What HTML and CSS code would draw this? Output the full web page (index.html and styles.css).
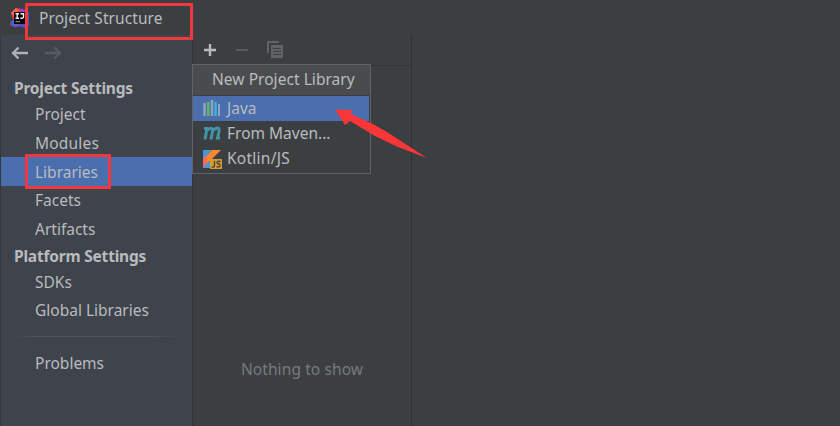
FILE: index.html
```html
<!DOCTYPE html>
<html lang="en">
<head>
<meta charset="utf-8">
<title>Project Structure</title>
<link rel="stylesheet" href="styles.css">
</head>
<body>
<div class="window">
  <header class="titlebar">
    <svg class="logo" width="20" height="20" viewBox="0 0 20 20">
      <path d="M1 5 6 0 13 1 15 17 5 19 0 17 3 12z" fill="#e8384f"/>
      <path d="M1 5 6 0 9 3 4 9z" fill="#ef6a4b"/>
      <path d="M0 14 5 11 8 19 2 18z" fill="#4b5ee8"/>
      <path d="M11 1 16 2 19 5V17L15 20 8 18z" fill="#4d50cf"/>
      <path d="M10 1 14 2 15 5H9z" fill="#b13bc0"/>
      <path d="M4 4H16V16H4z" fill="#08080c"/>
      <path d="M5.5 5.7H9M7.2 5.7V10.3M5.5 10.3H9M10.5 5.7H13.5V9Q13.5 10.3 10.3 10.3" fill="none" stroke="#eee" stroke-width="1.4"/>
      <path d="M5.5 13.7H10" stroke="#a69a8c"/>
    </svg>
    <span class="title">Project Structure</span>
  </header>
  <div class="body">
    <nav class="sidebar">
      <div class="history">
        <svg width="18" height="14" viewBox="0 0 18 14"><path d="M17 7H2M7.5 1.5 2 7l5.5 5.5" fill="none" stroke="#afb1b3" stroke-width="2.300"/></svg>
        <svg width="18" height="14" viewBox="0 0 18 14"><path d="M1 7H16M10.500 1.500 16 7l-5.500 5.500" fill="none" stroke="#565b60" stroke-width="2.300"/></svg>
      </div>
      <div class="group">Project Settings</div>
      <div class="item">Project</div>
      <div class="item modules">Modules</div>
      <div class="item selected">Libraries</div>
      <div class="item">Facets</div>
      <div class="item">Artifacts</div>
      <div class="group platform">Platform Settings</div>
      <div class="item">SDKs</div>
      <div class="item global">Global Libraries</div>
      <div class="separator"></div>
      <div class="item">Problems</div>
    </nav>
    <section class="list">
      <div class="toolbar">
        <svg width="14" height="14" viewBox="0 0 14 14"><path d="M7 1V13M1 7H13" stroke="#b8babc" stroke-width="2.400"/></svg>
        <svg width="14" height="14" viewBox="0 0 14 14"><path d="M1 7H13" stroke="#595c5e" stroke-width="2"/></svg>
        <svg width="16" height="17" viewBox="0 0 16 17"><path d="M1 12V1H12" fill="none" stroke="#606365" stroke-width="2"/><path d="M4 4H16V17H4z" fill="#606365"/><path d="M6 7.500H14M6 10.500H14M6 13.500H14" stroke="#3c3f41"/></svg>
      </div>
      <div class="empty">Nothing to show</div>
    </section>
    <main class="detail"></main>
  </div>
</div>

<div class="popup">
  <div class="popup-title">New Project Library</div>
  <div class="option active">
    <svg width="20" height="20" viewBox="0 0 20 20"><path d="M2.500 4V17" stroke="#91a3b7" stroke-width="2.500"/><path d="M6.200 3V17" stroke="#62b568" stroke-width="2.600"/><path d="M10 1V17" stroke="#91a3b7" stroke-width="2.500"/><path d="M13.500 3V17" stroke="#3bb1e2" stroke-width="2.500"/><path d="M17 5V17" stroke="#91a3b7" stroke-width="2"/></svg>
    <span>Java</span>
  </div>
  <div class="option">
    <svg width="20" height="20" viewBox="0 0 20 20"><path d="M2 4.500H5L3 15.500M4.500 7Q9 2.500 10.500 5.500Q10.900 6.500 9 15.500M10.500 7Q15 2.500 17 5Q17.500 6 15.500 14H18" fill="none" stroke="#4095a8" stroke-width="3"/></svg>
    <span>From Maven...</span>
  </div>
  <div class="option">
    <svg width="20" height="20" viewBox="0 0 20 20"><path d="M1 1H10L1 10z" fill="#3e9cdd"/><path d="M10 1H19L1 19V10z" fill="#f58a32"/><path d="M1 9 5 6V15L1 19z" fill="#ee6c62"/><path d="M1 19 8 12V19z" fill="#3e9cdd"/><path d="M8 10H20V20H8z" fill="#d09c3c"/><path d="M12.500 12V17Q12.500 18.300 9.700 18M18.500 12.500Q15 11.700 15 13.500Q15 14.700 16.700 15Q18.500 15.300 18 17Q17.500 18.500 14.500 17.700" fill="none" stroke="#4d402c" stroke-width="1.300"/></svg>
    <span class="kotlin">Kotlin/JS</span>
  </div>
</div>

<div class="mark mark-title"></div>
<div class="mark mark-item"></div>
<svg class="pointer" width="94" height="54" viewBox="0 0 94 54"><path d="M1 3.500 18 4 17 8 37 17 53 26 93 52 64 41 41 30 16 15 11 19z" fill="#fa3638"/></svg>
</body>
</html>
```

FILE: styles.css
```css
* { box-sizing: border-box; }
body {
  margin: 0;
  background: #3c3f41;
  color: #b9bbbd;
  font: 15.5px/20px "Noto Sans", "Open Sans", sans-serif;
  overflow: hidden;
}
svg { display: block; flex: none; }
.window { width: 840px; height: 426px; display: flex; flex-direction: column; }
.titlebar { height: 35px; display: flex; align-items: flex-start; padding: 8px 0 0 10px; }
.title { margin-left: 9px; letter-spacing: .08px; }
.body { flex: 1; display: grid; grid-template-columns: 192px 220px 1fr; }
.sidebar { background: #3f434c; border-left: 1px solid #36393c; }
.history { height: 40px; display: flex; gap: 15px; padding: 11px 0 0 10px; }
.group { height: 24px; padding-left: 13px; font-weight: 700; line-height: 25px; letter-spacing: -.2px; }
.item { height: 28.750px; line-height: 29px; padding-left: 34px; }
.history + .group { height: 25px; line-height: 27px; }
.modules { height: 28.250px; letter-spacing: .2px; }
.selected { background: #4b6eaf; height: 29px; line-height: 30px; }
.platform { line-height: 25px; }
.global { height: 28.250px; line-height: 28px; }
.separator { height: 1px; margin: 11px 10px 12px 14px; background: linear-gradient(90deg, transparent, #53575d 15%, #53575d 75%, transparent); }
.list { border-left: 1px solid #323536; border-right: 1px solid #2f3233; display: flex; flex-direction: column; }
.toolbar { height: 31px; border-bottom: 1px solid #333638; display: flex; gap: 18px; padding: 8px 0 0 10px; }
.toolbar svg:last-child { margin-top: -2px; }
.empty { margin-top: 293px; text-align: center; color: #777a7c; letter-spacing: .1px; }
.popup { position: absolute; left: 192px; top: 64px; width: 179px; height: 110px; background: #3c3f41; border: 1px solid #616365; }
.popup-title { height: 31px; background: #494c4e; border-bottom: 1px solid #3b3d3f; padding: 4px 0 0 19px; white-space: nowrap; letter-spacing: .05px; }
.option { height: 25px; margin-right: 1px; display: flex; align-items: center; gap: 5px; padding-left: 9px; }
.option span { margin-top: -2px; }
.kotlin { letter-spacing: .25px; }
.active { background: #4b6eaf; }
.mark { position: absolute; border: 3px solid #f1383d; }
.mark-title { left: 25px; top: 3px; width: 168px; height: 37px; }
.mark-item { left: 25px; top: 154px; width: 86px; height: 35px; }
.pointer { position: absolute; left: 334px; top: 106px; }
```
